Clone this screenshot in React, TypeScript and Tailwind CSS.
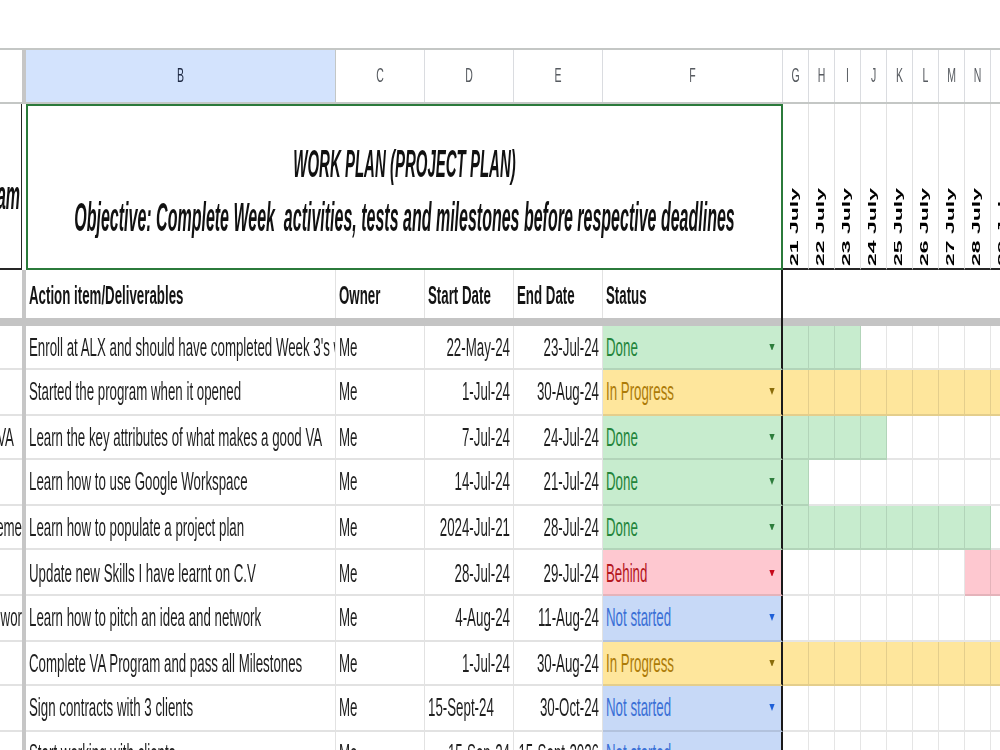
type Status = "Done" | "In Progress" | "Behind" | "Not started";

const look: Record<Status, { bg: string; fg: string; arrow: string }> = {
  Done: { bg: "bg-[#c7ecce]", fg: "text-[#23853b]", arrow: "fill-[#2d7d3c]" },
  "In Progress": { bg: "bg-[#fee69c]", fg: "text-[#ad7b07]", arrow: "fill-[#8a6c0a]" },
  Behind: { bg: "bg-[#fec8d0]", fg: "text-[#b5161d]", arrow: "fill-[#c5081a]" },
  "Not started": { bg: "bg-[#c7d9f7]", fg: "text-[#3a70d6]", arrow: "fill-[#1e5fd8]" },
};

type Task = {
  side?: string;
  sidePad?: string;
  item: string;
  start: string;
  startLeft?: boolean;
  end: string;
  status: Status;
  bar?: [number, number];
};

const tasks: Task[] = [
  { item: "Enroll at ALX and should have completed Week 3's work", start: "22-May-24", end: "23-Jul-24", status: "Done", bar: [0, 2] },
  { item: "Started the program when it opened", start: "1-Jul-24", end: "30-Aug-24", status: "In Progress", bar: [0, 8] },
  { side: "VA", sidePad: "pr-[8px]", item: "Learn the key attributes of what makes a good VA", start: "7-Jul-24", end: "24-Jul-24", status: "Done", bar: [0, 3] },
  { item: "Learn how to use Google Workspace", start: "14-Jul-24", end: "21-Jul-24", status: "Done", bar: [0, 0] },
  { side: "eme", item: "Learn how to populate a project plan", start: "2024-Jul-21", end: "28-Jul-24", status: "Done", bar: [0, 7] },
  { item: "Update new Skills I have learnt on C.V", start: "28-Jul-24", end: "29-Jul-24", status: "Behind", bar: [7, 8] },
  { side: "wor", item: "Learn how to pitch an idea and network", start: "4-Aug-24", end: "11-Aug-24", status: "Not started" },
  { item: "Complete VA Program and pass all Milestones", start: "1-Jul-24", end: "30-Aug-24", status: "In Progress", bar: [0, 8] },
  { item: "Sign contracts with 3 clients", start: "15-Sept-24", startLeft: true, end: "30-Oct-24", status: "Not started" },
  { item: "Start working with clients", start: "15-Sep-24", end: "15-Sept-2026", status: "Not started" },
];

const ganttCols = ["G", "H", "I", "J", "K", "L", "M", "N", "O"];
const days = ["21 July", "22 July", "23 July", "24 July", "25 July", "26 July", "27 July", "28 July", "29 July"];

function HeaderRow() {
  const main = [
    { l: "C", w: "w-[89px]" },
    { l: "D", w: "w-[89px]" },
    { l: "E", w: "w-[89px]" },
    { l: "F", w: "w-[180px]" },
  ];
  return (
    <div className="flex h-[28px] border-y border-[#c4c7c5] text-[10.5px] text-[#575b60]">
      <div className="w-[22px] shrink-0" />
      <div className="w-[4px] shrink-0 bg-[#c6c6c6]" />
      <div className="w-[310px] shrink-0 flex items-center justify-center bg-[#d3e3fd] text-[#1f2a44] border-r border-[#c4c7c5]">
        B
      </div>
      {main.map((c) => (
        <div key={c.l} className={`${c.w} shrink-0 flex items-center justify-center border-r border-[#dadce0]`}>
          {c.l}
        </div>
      ))}
      {ganttCols.map((c) => (
        <div key={c} className="w-[26px] shrink-0 flex items-center justify-center border-r border-[#dadce0]">
          {c}
        </div>
      ))}
    </div>
  );
}

function TitleRow() {
  return (
    <div className="flex h-[83px] text-[#111]">
      <div className="w-[22px] shrink-0 overflow-hidden flex items-center justify-end pt-[9px] pr-[1px] border-r border-b border-[#262626]">
        <span className="inline-block whitespace-nowrap text-[16px] font-bold italic leading-none scale-y-[1.25]">am</span>
      </div>
      <div className="w-[4px] shrink-0" />
      <div className="w-[757px] shrink-0 flex flex-col items-center justify-center pt-[3px] border-x-2 border-y border-[#2b7a3b] font-bold italic">
        <div className="h-[27px] flex items-center">
          <span className="inline-block text-[15px] leading-none scale-y-[1.3]">WORK PLAN (PROJECT PLAN)</span>
        </div>
        <div className="h-[27px] flex items-center">
          <span className="inline-block text-[16px] leading-none whitespace-pre scale-y-[1.25]">
            Objective: Complete Week  activities, tests and milestones before respective deadlines
          </span>
        </div>
      </div>
      {days.map((d) => (
        <div
          key={d}
          className="w-[26px] shrink-0 flex items-end justify-center pb-[1px] pr-[3px] border-r border-r-[#e2e2e2] border-b border-b-[#262626]"
        >
          <span className="[writing-mode:vertical-rl] rotate-180 whitespace-nowrap text-[11.5px] font-bold leading-[12px] text-black">
            {d}
          </span>
        </div>
      ))}
    </div>
  );
}

function LabelRow() {
  const cell = "shrink-0 flex items-center pl-[3px] pt-[2px] border-r border-[#e2e2e2]";
  return (
    <div className="flex h-[23.5px] font-bold text-[13.3px] leading-none text-[#141414]">
      <div className="w-[22px] shrink-0" />
      <div className="w-[4px] shrink-0 bg-[#c6c6c6]" />
      <div className={`w-[310px] ${cell}`}>Action item/Deliverables</div>
      <div className={`w-[89px] ${cell}`}>Owner</div>
      <div className={`w-[89px] ${cell}`}>Start Date</div>
      <div className={`w-[89px] ${cell}`}>End Date</div>
      <div className="w-[180px] shrink-0 flex items-center pl-[3px] pt-[2px] border-r-2 border-[#1a1a1a]">Status</div>
      <div className="flex-1" />
    </div>
  );
}

function FreezeBand() {
  return (
    <div className="flex h-[4px]">
      <div className="w-[781px] shrink-0 bg-[#c4c4c4]" />
      <div className="w-[2px] shrink-0 bg-[#1a1a1a]" />
      <div className="flex-1 bg-[#c4c4c4]" />
    </div>
  );
}

function TaskRow({ task }: { task: Task }) {
  const s = look[task.status];
  const cell = "shrink-0 overflow-hidden whitespace-nowrap flex items-center border-r border-b border-[#e2e2e2]";
  return (
    <div className="flex h-[22.6px] text-[13.3px] leading-none">
      <div
        className={`w-[22px] shrink-0 overflow-hidden whitespace-nowrap flex items-center justify-end border-b border-[#e2e2e2] ${task.sidePad ?? ""}`}
      >
        {task.side}
      </div>
      <div className="w-[4px] shrink-0 bg-[#c6c6c6]" />
      <div className={`w-[310px] pl-[3px] ${cell}`}>{task.item}</div>
      <div className={`w-[89px] pl-[3px] ${cell}`}>Me</div>
      <div className={`w-[89px] ${cell} ${task.startLeft ? "justify-start pl-[3px]" : "justify-end pr-[3px]"}`}>
        {task.start}
      </div>
      <div className={`w-[89px] justify-end pr-[3px] ${cell}`}>{task.end}</div>
      <div
        className={`w-[180px] shrink-0 flex items-center justify-between pl-[3px] pr-[6px] border-b border-b-black/10 border-r-2 border-r-[#1a1a1a] ${s.bg}`}
      >
        <span className={s.fg}>{task.status}</span>
        <svg width="6" height="3.5" viewBox="0 0 6 4" className={s.arrow}>
          <path d="M0 0H6L3 4Z" />
        </svg>
      </div>
      {ganttCols.map((c, i) => {
        const on = task.bar && i >= task.bar[0] && i <= task.bar[1];
        return <div key={c} className={`w-[26px] shrink-0 border-r border-b border-black/10 ${on ? s.bg : ""}`} />;
      })}
    </div>
  );
}

export default function App() {
  return (
    <div className="w-[1000px] h-[750px] overflow-hidden bg-white">
      <div className="w-[1000px] origin-top scale-y-200 font-['Liberation_Sans',Arial,sans-serif] text-[#1f1f1f]">
        <div className="h-[24px]" />
        <HeaderRow />
        <TitleRow />
        <LabelRow />
        <FreezeBand />
        {tasks.map((t, i) => (
          <TaskRow key={i} task={t} />
        ))}
      </div>
    </div>
  );
}
